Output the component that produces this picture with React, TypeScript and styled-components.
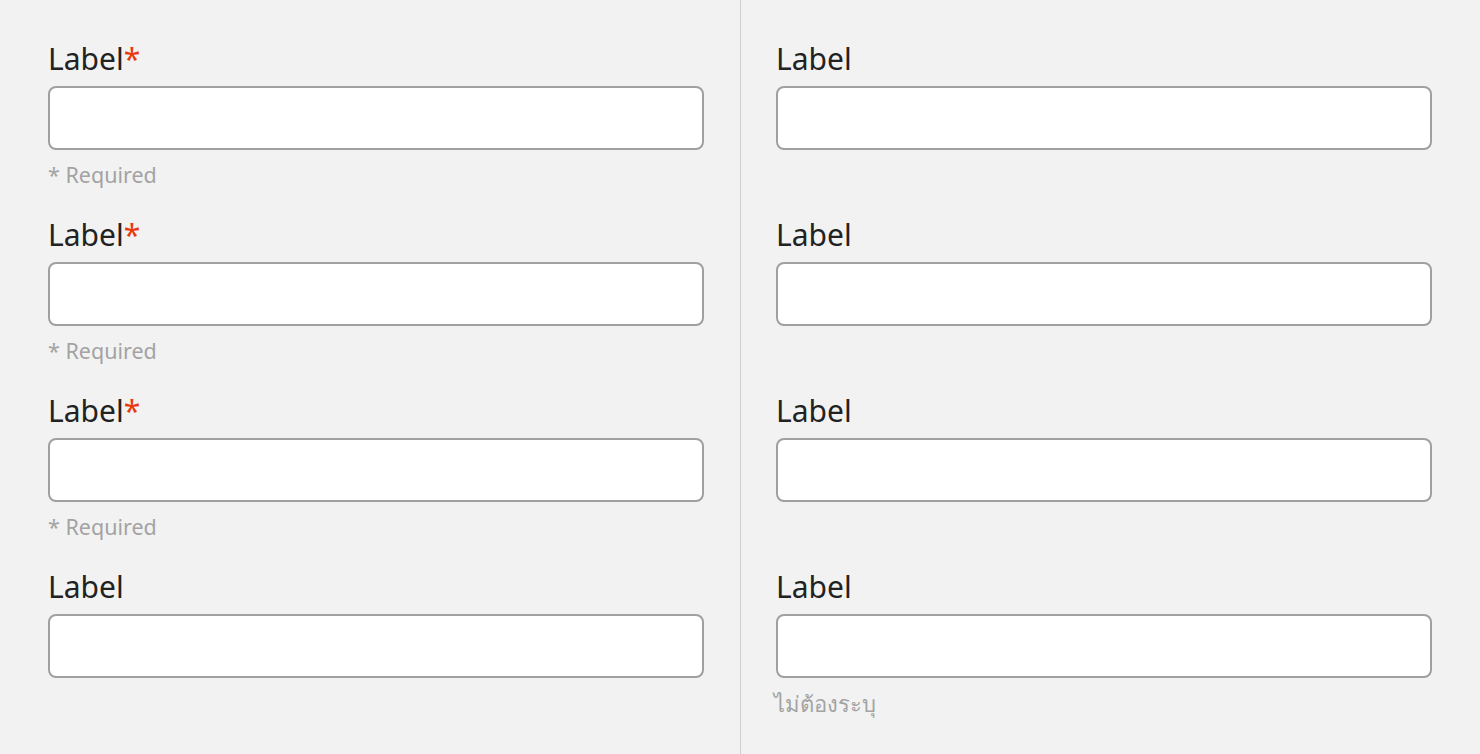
import React from "react";
import styled, { createGlobalStyle } from "styled-components";

const GlobalStyle = createGlobalStyle`
  html, body {
    margin: 0;
    padding: 0;
    background-color: #f2f2f2;
  }
  body {
    font-family: "Noto Sans", "Liberation Sans", sans-serif;
  }
`;

const Page = styled.div`
  display: grid;
  grid-template-columns: 740px 1fr;
  width: 1480px;
  height: 754px;
  background-color: #f2f2f2;
  overflow: hidden;
`;

const Column = styled.div<{ $divider?: boolean }>`
  display: flex;
  flex-direction: column;
  gap: 28px;
  padding: 41px 48px 0 ${({ $divider }) => ($divider ? "35px" : "48px")};
  border-left: ${({ $divider }) => ($divider ? "1px solid #cfcfcf" : "none")};
`;

const Field = styled.div`
  display: flex;
  flex-direction: column;
`;

const Label = styled.label`
  font-size: 30px;
  line-height: 36px;
  color: #222222;
  margin-bottom: 9px;
`;

const Star = styled.span`
  color: #e8380d;
`;

const Input = styled.input`
  box-sizing: border-box;
  width: 656px;
  height: 64px;
  border: 2px solid #a0a0a0;
  border-radius: 8px;
  background-color: #ffffff;
  font-size: 20px;
  padding: 0 16px;

  :focus {
    outline: none;
  }
`;

const Helper = styled.div<{ $thai?: boolean }>`
  height: 28px;
  margin-top: 11px;
  font-size: ${({ $thai }) => ($thai ? "22px" : "21.5px")};
  line-height: 28px;
  color: #a3a3a3;
  margin-left: ${({ $thai }) => ($thai ? "-2px" : "0")};
`;

type FieldDef = { required?: boolean; hint?: string; thai?: boolean };

const leftFields: FieldDef[] = [
  { required: true, hint: "* Required" },
  { required: true, hint: "* Required" },
  { required: true, hint: "* Required" },
  {},
];

const rightFields: FieldDef[] = [{}, {}, {}, { hint: "ไม่ต้องระบุ", thai: true }];

const FormField: React.FC<{ field: FieldDef; id: string }> = ({ field, id }) => (
  <Field>
    <Label htmlFor={id}>
      Label
      {field.required && <Star>*</Star>}
    </Label>
    <Input id={id} type="text" />
    <Helper $thai={field.thai}>{field.hint}</Helper>
  </Field>
);

const App: React.FC = () => {
  return (
    <>
      <GlobalStyle />
      <Page>
        <Column>
          {leftFields.map((f, i) => (
            <FormField key={i} field={f} id={`left-${i}`} />
          ))}
        </Column>
        <Column $divider>
          {rightFields.map((f, i) => (
            <FormField key={i} field={f} id={`right-${i}`} />
          ))}
        </Column>
      </Page>
    </>
  );
};

export default App;
